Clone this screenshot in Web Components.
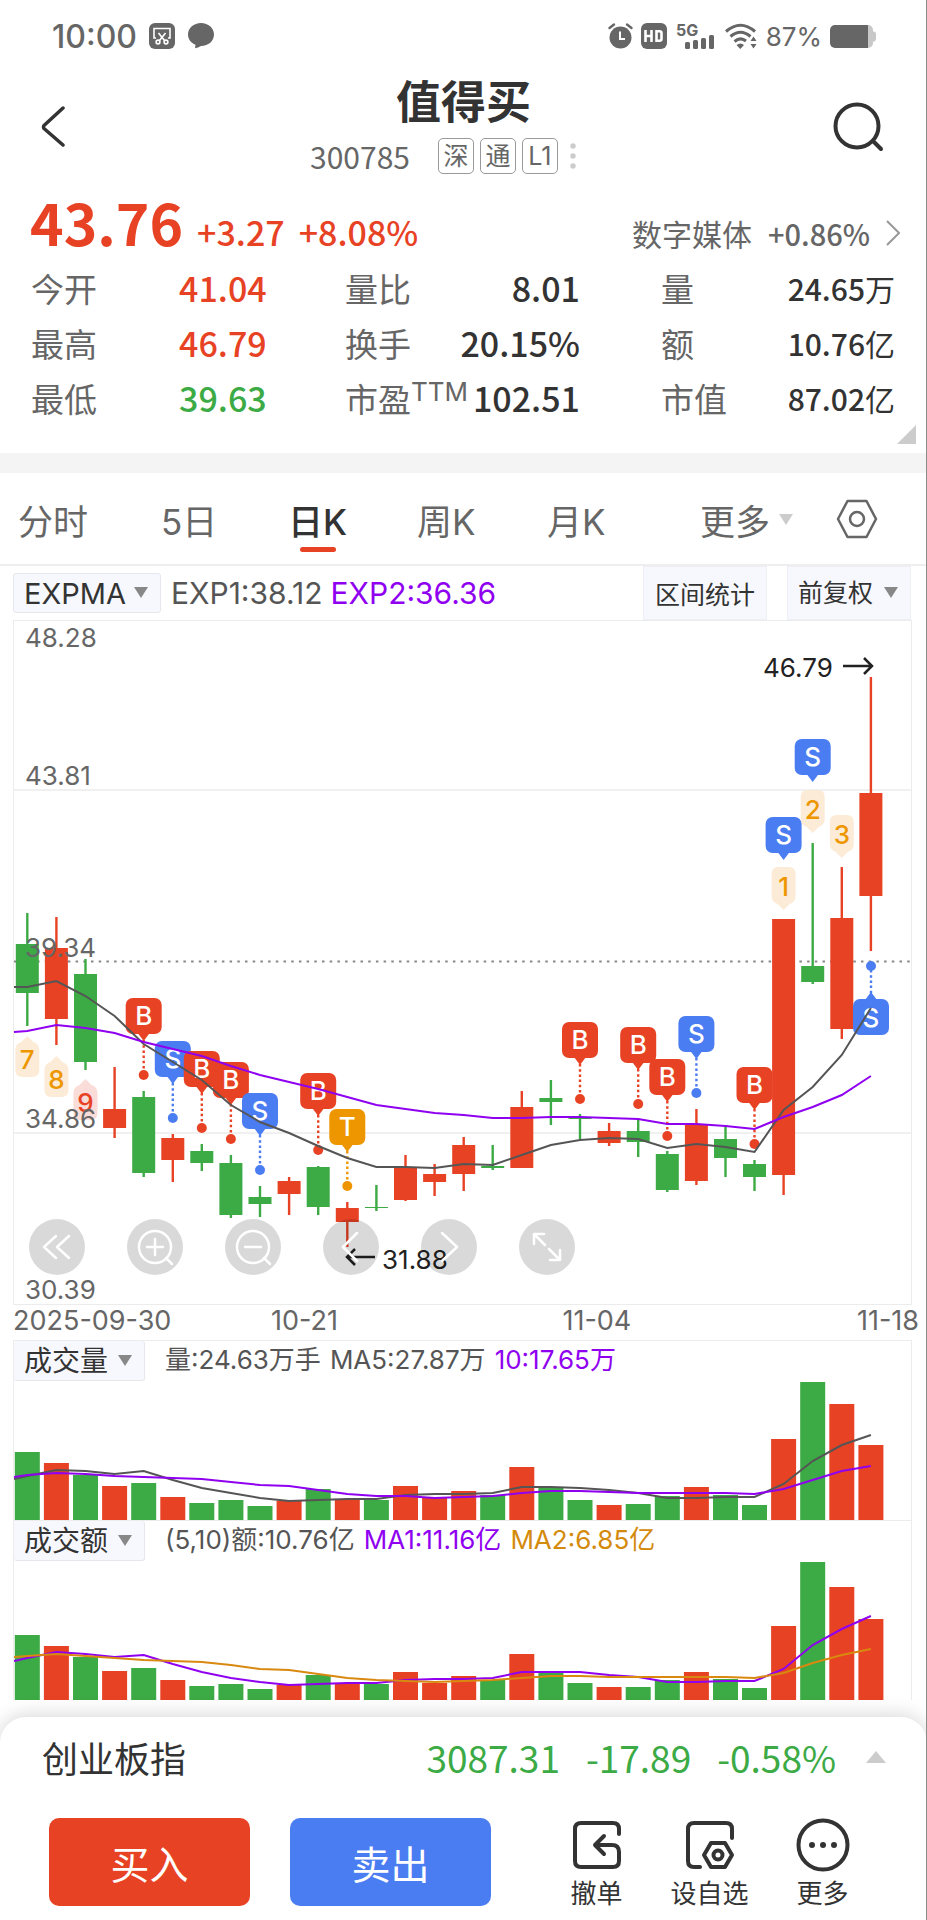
<!DOCTYPE html>
<html lang="zh-CN">
<head>
<meta charset="utf-8">
<meta name="viewport" content="width=device-width, initial-scale=1">
<title>值得买 300785</title>
<style>
  :root {
    --red: #e84225;
    --green: #3caa45;
    --blue: #4a7cf2;
    --orange: #ed9600;
    --purple: #9000f0;
    --ink: #333;
    --gray: #666;
    --line: #ececec;
    --chip: #f7f8fd;
    --num: "Noto Sans CJK SC", sans-serif;
  }

  body {
    margin: 0;
    background: #fff;
    color: var(--ink);
    font-family: Inter, "Noto Sans CJK SC", sans-serif;
  }

  /* 屏幕右侧的细边 */
  body::after {
    content: "";
    position: fixed;
    top: 0;
    right: 0;
    bottom: 0;
    width: 1px;
    background: #8c8c8c;
  }
</style>
</head>
<body>
<status-bar time="10:00" battery="87%"></status-bar>
<stock-header name="值得买" code="300785">
  <stock-tag>深</stock-tag>
  <stock-tag>通</stock-tag>
  <stock-tag>L1</stock-tag>
</stock-header>
<stock-quote></stock-quote>
<period-tabs></period-tabs>
<indicator-bar></indicator-bar>
<k-chart></k-chart>
<volume-chart kind="volume" title-text="成交量">
  <span>量:24.63万手</span>
  <span>MA5:27.87万</span>
  <span style="color: var(--purple)">10:17.65万</span>
</volume-chart>
<volume-chart kind="amount" title-text="成交额">
  <span>(5,10)额:10.76亿</span>
  <span style="color: var(--purple)">MA1:11.16亿</span>
  <span style="color: #d48a0c">MA2:6.85亿</span>
</volume-chart>
<trade-sheet></trade-sheet>

<script>
// 公共部分: 创建 shadow root 并写入模板
class BaseElement extends HTMLElement {
  constructor() {
    super();
    this.attachShadow({ mode: "open" });
  }

  connectedCallback() {
    this.shadowRoot.innerHTML = this.template();
  }
}

class StatusBar extends BaseElement {
  template() {
    return `
<style>
  :host {
    display: flex;
    align-items: center;
    height: 72px;
    padding: 0 51px 0 52px;
    color: #666;
  }
  .time { font-size: 32px; font-weight: 500; margin-right: 12px; }
  .msg { margin-left: 13px; }
  .right { margin-left: auto; display: flex; align-items: center; gap: 8px; }
  .percent { font-size: 26px; }
  svg { display: block; overflow: visible; }
</style>
<span class="time">${this.getAttribute("time")}</span>
<svg width="26" height="26" viewBox="0 0 26 26">
  <rect width="26" height="26" rx="6" fill="#666"/>
  <g fill="none" stroke="#fff" stroke-width="1.6">
    <path d="M7 15H5V5.500H21V15H19M9.500 10l6 7.500M16.500 10l-6 7.500"/>
    <circle cx="9" cy="19" r="1.900"/><circle cx="17" cy="19" r="1.900"/>
  </g>
</svg>
<svg class="msg" width="26" height="26" viewBox="0 0 26 26">
  <path fill="#666" d="M13 0c7.200 0 13 5 13 11.500S20.500 23 13 23c-2 1.200-4 2-6 2.300l.5-3.500C3 20 0 16 0 11.500 0 5 5.800 0 13 0z"/>
</svg>
<div class="right">
  <svg width="25" height="26" viewBox="0 0 25 26">
    <circle cx="12.500" cy="14.500" r="11" fill="#666"/>
    <path d="M1.500 5L6 1.500M23.500 5L19 1.500" stroke="#666" stroke-width="2.400" stroke-linecap="round"/>
    <path d="M12 8.500v7.500h5" fill="none" stroke="#fff" stroke-width="2"/>
  </svg>
  <svg width="26" height="26" viewBox="0 0 26 26">
    <rect width="26" height="26" rx="6" fill="#666"/>
    <path d="M4.500 7v12M10.500 7v12M4.500 13h6M15.500 8.200v9.600h3a2 2 0 0 0 2-2v-5.600a2 2 0 0 0-2-2z" fill="none" stroke="#fff" stroke-width="2.600"/>
  </svg>
  <svg width="41" height="28" viewBox="0 0 41 28">
    <text x="1" y="14" font-size="16" font-weight="700" fill="#666">5G</text>
    <g fill="#666">
      <rect x="10" y="20" width="5" height="7" rx="1.500"/><rect x="18" y="18" width="5" height="9" rx="1.500"/>
      <rect x="26" y="16" width="5" height="11" rx="1.500"/><rect x="34" y="13" width="5" height="14" rx="1.500"/>
    </g>
  </svg>
  <svg width="34" height="26" viewBox="0 0 34 26">
    <g fill="none" stroke="#666" stroke-width="3">
      <path d="M2 8.500Q16.500-4 31 8.500"/><path d="M6.500 13.500Q16.500 5 26.500 13.500"/><path d="M10.500 18.500Q16.500 13.500 22 18"/>
    </g>
    <path fill="#666" d="M12.500 22Q16.500 19 20 22l-3.700 4zM29.500 13.500l3 4.500h-6zM29.500 25.500l3-4.500h-6z"/>
  </svg>
  <span class="percent">${this.getAttribute("battery")}</span>
  <svg width="46" height="23" viewBox="0 0 46 23">
    <path d="M36 0h2a5 5 0 0 1 5 5v1.500a2.500 2.500 0 0 1 3 2.500v5a2.500 2.500 0 0 1-3 2.500V18a5 5 0 0 1-5 5h-2z" fill="#c8c8c8"/>
    <path d="M38 0v23H5a5 5 0 0 1-5-5V5a5 5 0 0 1 5-5z" fill="#666"/>
  </svg>
</div>`;
  }
}

class StockTag extends BaseElement {
  template() {
    return `
<style>
  :host {
    display: inline-flex;
    align-items: center;
    justify-content: center;
    box-sizing: border-box;
    width: 36px;
    height: 36px;
    border: 1px solid #999;
    border-radius: 5px;
    color: var(--gray);
    font-size: 25px;
    line-height: 1;
  }
</style>
<slot></slot>`;
  }
}

class StockHeader extends BaseElement {
  template() {
    return `
<style>
  :host {
    display: grid;
    grid-template-columns: 110px 1fr 110px;
    align-items: center;
    height: 110px;
    padding-bottom: 8px;
    box-sizing: border-box;
  }
  button { border: 0; background: none; padding: 0; cursor: pointer; display: flex; }
  .back { padding: 4px 0 0 40px; }
  .search { padding: 4px 0 0 16px; }
  .middle { text-align: center; }
  h1 { margin: 0; font-size: 45px; font-weight: 700; line-height: 62px; }
  .sub { display: flex; align-items: center; justify-content: center; height: 44px; gap: 6px; padding-right: 40px; }
  .code { font-family: var(--num); font-size: 30px; color: var(--gray); margin-right: 22px; }
  .dots { margin-left: 5px; }
</style>
<button class="back" aria-label="返回">
  <svg width="26" height="42" viewBox="0 0 26 42" fill="none" stroke="#333" stroke-width="3.500" stroke-linecap="round" stroke-linejoin="round"><path d="M23 2L4 19.500Q3 21 4 22.500L23 39"/></svg>
</button>
<div class="middle">
  <h1>${this.getAttribute("name")}</h1>
  <div class="sub">
    <span class="code">${this.getAttribute("code")}</span>
    <slot></slot>
    <svg class="dots" width="8" height="28" viewBox="0 0 8 28" fill="#ccc"><circle cx="4" cy="4" r="2.700"/><circle cx="4" cy="14" r="2.700"/><circle cx="4" cy="24" r="2.700"/></svg>
  </div>
</div>
<button class="search" aria-label="搜索">
  <svg width="54" height="54" viewBox="0 0 54 54" fill="none" stroke="#333" stroke-width="4" stroke-linecap="round"><circle cx="24" cy="26" r="21.500"/><path d="M40 41l8 8"/></svg>
</button>`;
  }
}

class StockQuote extends BaseElement {
  template() {
    return `
<style>
  :host {
    display: block;
    position: relative;
    height: 271px;
    border-bottom: 20px solid #f4f4f4;
    font-family: var(--num);
    color: var(--ink);
  }
  .top { display: flex; align-items: baseline; height: 78px; padding: 0 27px 0 30px; line-height: 78px; }
  .price { font-size: 57px; font-weight: 700; color: var(--red); }
  .diff { font-size: 34px; font-weight: 500; color: var(--red); margin-left: 14px; }
  .sector { display: flex; align-items: center; margin-left: auto; color: var(--gray); font-size: 30px; text-decoration: none; }
  .sector b { font-size: 29px; font-weight: 500; margin: 0 16px; }
  dl {
    display: grid;
    grid-template-columns: 148px 166px 128px 107px 145px 1fr;
    grid-auto-rows: 55px;
    align-items: center;
    margin: 0;
    padding: 0 32px 0 31px;
  }
  dt { font-size: 33px; color: var(--gray); white-space: nowrap; }
  dd { display: flex; align-items: center; margin: 0; font-size: 34px; font-weight: 500; white-space: nowrap; }
  .mid { justify-content: flex-end; }
  .mid + dt { padding-left: 81px; }
  .last { justify-content: flex-end; font-size: 30px; }
  .last span { font-weight: 400; }
  sup { font-family: Inter; font-size: 26px; line-height: 0; vertical-align: 11px; }
  .up { color: var(--red); }
  .down { color: var(--green); }
  .fold { position: absolute; right: 11px; bottom: 9px; }
</style>
<div class="top">
  <span class="price">43.76</span>
  <span class="diff">+3.27</span>
  <span class="diff">+8.08%</span>
  <a class="sector" href="#">数字媒体 <b>+0.86%</b>
    <svg width="14" height="26" viewBox="0 0 14 26" fill="none" stroke="#999" stroke-width="2"><path d="M1 1l12 12L1 25"/></svg>
  </a>
</div>
<dl>
  <dt>今开</dt><dd class="up">41.04</dd>
  <dt>量比</dt><dd class="mid">8.01</dd>
  <dt>量</dt><dd class="last">24.65<span>万</span></dd>
  <dt>最高</dt><dd class="up">46.79</dd>
  <dt>换手</dt><dd class="mid">20.15%</dd>
  <dt>额</dt><dd class="last">10.76<span>亿</span></dd>
  <dt>最低</dt><dd class="down">39.63</dd>
  <dt>市盈<sup>TTM</sup></dt><dd class="mid">102.51</dd>
  <dt>市值</dt><dd class="last">87.02<span>亿</span></dd>
</dl>
<svg class="fold" width="19" height="19" viewBox="0 0 19 19"><path d="M19 0v19H0z" fill="#ccc"/></svg>`;
  }
}

class PeriodTabs extends BaseElement {
  template() {
    return `
<style>
  :host { display: block; border-bottom: 2px solid #eee; }
  nav {
    display: grid;
    grid-template-columns: 143px 127px 129px 130px 153px 136px 1fr;
    height: 91px;
    padding-left: 18px;
  }
  button {
    position: relative;
    display: flex;
    align-items: center;
    gap: 9px;
    padding: 1px 0 0;
    border: 0;
    background: none;
    font: inherit;
    font-size: 35px;
    color: var(--gray);
    cursor: pointer;
  }
  .on { color: var(--ink); font-weight: 500; }
  .on span { position: relative; }
  .on span::after {
    content: "";
    position: absolute;
    left: 50%;
    bottom: -7px;
    width: 36px;
    height: 5px;
    margin-left: -18px;
    border-radius: 3px;
    background: var(--red);
  }
</style>
<nav>
  <button>分时</button>
  <button>5日</button>
  <button class="on"><span>日K</span></button>
  <button>周K</button>
  <button>月K</button>
  <button aria-haspopup="menu">更多 <svg width="14" height="11" viewBox="0 0 14 11"><path d="M0 0h14L7 11z" fill="#ccc"/></svg></button>
  <button aria-label="设置">
    <svg width="42" height="40" viewBox="0 0 42 40" fill="none" stroke="#666" stroke-width="2.500" stroke-linejoin="round"><path d="M11.500 2h19L40 20l-9.500 18h-19L2 20z"/><circle cx="21" cy="20" r="7"/></svg>
  </button>
</nav>`;
  }
}

// 带▼的下拉框
class DropPick extends BaseElement {
  template() {
    const label = this.getAttribute("label");
    const value = this.getAttribute("value");
    return `
<style>
  :host { display: inline-block; position: relative; box-sizing: border-box; background: var(--chip); border: 1px solid #e6e7ec; border-radius: 3px; }
  select {
    appearance: none;
    width: 100%;
    height: 100%;
    padding: 0 0 0 10px;
    border: 0;
    background: none;
    font: inherit;
    color: var(--ink);
  }
  svg { position: absolute; right: 12px; top: 50%; margin-top: -6px; pointer-events: none; }
</style>
<select aria-label="${label}"><option>${value}</option></select>
<svg width="14" height="11" viewBox="0 0 14 11"><path d="M0 0h14L7 11z" fill="#888"/></svg>`;
  }
}

class IndicatorBar extends BaseElement {
  template() {
    return `
<style>
  :host { display: flex; align-items: center; height: 54px; padding: 0 16px 0 13px; font-size: 30px; }
  .exp { width: 148px; height: 40px; font-size: 29px; }
  .v { margin-left: 10px; color: #555; }
  .v + .v { margin-left: 8px; color: var(--purple); }
  button { margin-left: auto; width: 124px; height: 54px; padding: 0; border: 1px solid #eeeff5; background: var(--chip); font: inherit; font-size: 25px; color: var(--ink); }
  .adj { width: 124px; height: 54px; margin-left: 20px; font-size: 25px; border-color: #eeeff5; border-radius: 0; }
</style>
<drop-pick class="exp" label="指标" value="EXPMA"></drop-pick>
<span class="v">EXP1:38.12</span>
<span class="v">EXP2:36.36</span>
<button>区间统计</button>
<drop-pick class="adj" label="复权" value="前复权"></drop-pick>`;
  }
}

// 30根K线的中心横坐标
const X = i => (27.3 + i * 29.09).toFixed(1);
const COLORS = { r: "#e84225", g: "#3caa45" };

// [颜色, 最高, 实体上沿, 实体下沿, 最低]
const CANDLES = [
  ["g", 913, 944, 993, 1026], ["r", 917, 948, 1019, 1045], ["g", 959, 974, 1062, 1070],
  ["r", 1067, 1109, 1128, 1138], ["g", 1091, 1097, 1173, 1177], ["r", 1134, 1138, 1160, 1182],
  ["g", 1144, 1151, 1163, 1171], ["g", 1155, 1163, 1215, 1218], ["g", 1186, 1197, 1204, 1217],
  ["r", 1177, 1181, 1194, 1215], ["g", 1166, 1167, 1207, 1215], ["r", 1202, 1208, 1222, 1247],
  ["g", 1185, 1207, 1208, 1211], ["r", 1155, 1168, 1200, 1201], ["r", 1164, 1174, 1182, 1196],
  ["r", 1137, 1145, 1174, 1191], ["g", 1145, 1166, 1168, 1170], ["r", 1091, 1107, 1168, 1168],
  ["g", 1080, 1098, 1102, 1125], ["g", 1114, 1118, 1119, 1139], ["r", 1123, 1131, 1143, 1146],
  ["g", 1120, 1131, 1142, 1157], ["g", 1151, 1154, 1190, 1192], ["r", 1109, 1125, 1181, 1185],
  ["g", 1125, 1139, 1158, 1177], ["g", 1160, 1164, 1177, 1191], ["r", 919, 919, 1175, 1195],
  ["g", 843, 966, 982, 984], ["r", 867, 918, 1029, 1039], ["r", 677, 793, 896, 951],
];

// 第一个值是左边框处的高度
const EXP1 = [987, 987, 981, 996, 1016, 1044, 1062, 1080, 1105, 1122, 1133, 1146, 1158, 1167, 1167, 1168, 1164, 1165, 1155, 1145, 1140, 1138, 1139, 1148, 1144, 1147, 1152, 1110, 1087, 1055, 1008];
const EXP2 = [1032, 1031, 1025, 1028, 1033, 1042, 1049, 1056, 1066, 1075, 1082, 1089, 1097, 1105, 1109, 1113, 1115, 1118, 1118, 1117, 1117, 1118, 1119, 1124, 1124, 1126, 1129, 1117, 1107, 1095, 1076];

// 买卖点 [字母, 第几根K线, 上沿, 是否有虚线]
const MARKS = [
  ["B", 4, 998, 1], ["S", 5, 1041, 1], ["B", 6, 1051, 1], ["B", 7, 1062, 1], ["S", 8, 1093, 1],
  ["B", 10, 1073, 1], ["T", 11, 1109, 1], ["B", 19, 1022, 1], ["B", 21, 1027, 1], ["B", 22, 1059, 1],
  ["S", 23, 1016, 1], ["B", 25, 1067, 1], ["S", 26, 817, 0], ["S", 27, 739, 0],
];
const MARK_COLORS = { B: "#e84225", S: "#4a7cf2", T: "#ed9600" };

const polyline = (ys, color) =>
  `<polyline fill="none" stroke="${color}" stroke-width="2" points="${ys.map((y, i) => `${i ? X(i - 1) : 14},${y}`).join(" ")}"/>`;

class KChart extends BaseElement {
  candles() {
    return CANDLES.map(([c, high, top, bottom, low], i) => {
      const x = +X(i);
      return `<g fill="${COLORS[c]}"><rect x="${x - 1.2}" y="${high}" width="2.400" height="${low - high}"/><rect x="${x - 11.5}" y="${top}" width="23" height="${bottom - top}"/></g>`;
    }).join("");
  }

  marks() {
    return MARKS.map(([t, i, top, dotted]) => {
      const x = +X(i);
      const c = MARK_COLORS[t];
      const line = dotted
        ? `<path d="M${x} ${top + 42}v31" stroke="${c}" stroke-width="2.400" stroke-dasharray="2.500 2.700"/><circle cx="${x}" cy="${top + 77}" r="5"/>`
        : "";
      return `<g fill="${c}"><rect x="${x - 18}" y="${top}" width="36" height="36" rx="7"/><path d="M${x - 6} ${top + 35}h12l-6 8z"/>${line}<text x="${x}" y="${top + 27}" class="m">${t}</text></g>`;
    }).join("");
  }

  // 九转数字, up 为 true 时尖角朝上
  count(n, i, y, up, color, back) {
    const x = +X(i);
    const shape = up
      ? `M${x} ${y}l6 6q6 2 6 8v20q0 7-7 7h-10q-7 0-7-7v-20q0-6 6-8z`
      : `M${x} ${y + 43}l-6-6q-6-2-6-8v-22q0-7 7-7h10q7 0 7 7v22q0 6-6 8z`;
    return `<path d="${shape}" fill="${back}"/><text x="${x}" y="${y + (up ? 33 : 29)}" class="n" fill="${color}">${n}</text>`;
  }

  template() {
    const yellow = ["#ed9600", "#fcecd7"];
    return `
<style>
  :host { display: block; margin: 0 8px 0 13px; color: var(--gray); }
  .frame { position: relative; margin-right: 7px; border: 1px solid var(--line); }
  .plot { display: block; width: 100%; height: auto; overflow: visible; font-size: 26px; }
  .m { fill: #fff; font-size: 26px; font-weight: 500; text-anchor: middle; }
  .n { font-size: 26px; font-weight: 500; text-anchor: middle; }
  .tools { position: absolute; left: 15px; bottom: 29px; display: flex; gap: 42px; }
  .tools button { width: 56px; height: 56px; padding: 0; border: 0; border-radius: 50%; background: rgba(0, 0, 0, 0.15); }
  .tools svg { display: block; fill: none; stroke: #fff; stroke-width: 2.5; stroke-linecap: round; stroke-linejoin: round; }
  .dates { display: grid; grid-template-columns: 255fr 288fr 291fr auto; height: 35px; font-size: 27px; line-height: 32px; }
</style>
<div class="frame">
  <svg class="plot" viewBox="14 621 897 683">
    <path d="M14 790H911M14 1133H911" stroke="#ececec" stroke-width="1.500"/>
    <path d="M14 961.500H911" stroke="#888" stroke-width="2" stroke-dasharray="2.500 5.200"/>
    ${this.candles()}
    ${this.count(7, 0, 1036, true, ...yellow)}
    ${this.count(8, 1, 1056, true, ...yellow)}
    ${this.count(9, 2, 1079, true, "#e84225", "#fadcd8")}
    ${this.count(1, 26, 867, false, ...yellow)}
    ${this.count(2, 27, 790, false, ...yellow)}
    ${this.count(3, 28, 815, false, ...yellow)}
    ${this.marks()}
    <g fill="#4a7cf2">
      <rect x="853" y="999" width="36" height="36" rx="7"/><path d="M865 1000h12l-6-8z"/>
      <path d="M871 970v24" stroke="#4a7cf2" stroke-width="2.400" stroke-dasharray="2.500 2.700"/>
      <circle cx="871" cy="966" r="5"/><text x="871" y="1027" class="m">S</text>
    </g>
    ${polyline(EXP1, "#555")}
    ${polyline(EXP2, "#9000f0")}
    <g fill="#666">
      <text x="25" y="647">48.28</text>
      <text x="25" y="785">43.81</text>
      <text x="25" y="957">39.34</text>
      <text x="25" y="1128">34.86</text>
      <text x="25" y="1299">30.39</text>
    </g>
    <g fill="#222">
      <text x="763" y="677">46.79</text>
      <text x="382" y="1269">31.88</text>
      <path d="M843 666h28M864 658l8 8-8 8M375 1257h-28M355 1249l-8 8 8 8" fill="none" stroke="#222" stroke-width="2.500"/>
    </g>
  </svg>
  <div class="tools">
    <button aria-label="最前"><svg width="56" height="56" viewBox="0 0 56 56"><path d="M27 17L15 28l12 11M40 17L28 28l12 11"/></svg></button>
    <button aria-label="放大"><svg width="56" height="56" viewBox="0 0 56 56"><circle cx="28" cy="28" r="16"/><path d="M20 28h16M28 20v16M39 39l6 6"/></svg></button>
    <button aria-label="缩小"><svg width="56" height="56" viewBox="0 0 56 56"><circle cx="28" cy="28" r="16"/><path d="M20 28h16M39 39l6 6"/></svg></button>
    <button aria-label="向左"><svg width="56" height="56" viewBox="0 0 56 56"><path d="M34 14L20 28l14 14"/></svg></button>
    <button aria-label="向右"><svg width="56" height="56" viewBox="0 0 56 56"><path d="M21 14l15 14-15 14"/></svg></button>
    <button aria-label="全屏"><svg width="56" height="56" viewBox="0 0 56 56"><path d="M25 15H15v10M15 15l11 11M31 41h10V31M41 41L30 30"/></svg></button>
  </div>
</div>
<div class="dates"><span>2025-09-30</span><span>10-21</span><span>11-04</span><span>11-18</span></div>`;
  }
}

// 柱高和均线, 都从底边算起
const VOLUMES = {
  volume: {
    bars: [68, 57, 45, 34, 37, 23, 17, 20, 14, 19, 31, 20, 20, 34, 23, 29, 25, 53, 32, 20, 15, 16, 24, 33, 25, 15, 81, 138, 116, 75],
    lines: [
      ["#555", [41, 44, 50, 49, 46, 49, 40, 32, 27, 22, 19, 20, 21, 21, 25, 26, 26, 27, 33, 33, 32, 30, 27, 22, 22, 23, 23, 36, 59, 75, 85]],
      ["#9000f0", [43, 45, 47, 46, 44, 43, 42, 41, 38, 35, 34, 30, 26, 24, 24, 22, 23, 24, 27, 29, 29, 28, 27, 27, 27, 27, 26, 31, 40, 49, 54]],
    ],
  },
  amount: {
    bars: [65, 54, 43, 29, 32, 20, 14, 16, 11, 15, 25, 16, 16, 28, 17, 24, 20, 46, 27, 17, 13, 13, 20, 28, 21, 12, 74, 138, 113, 81],
    lines: [
      ["#9000f0", [39, 42, 48, 46, 43, 45, 36, 28, 22, 18, 15, 16, 17, 17, 20, 21, 21, 22, 28, 28, 28, 25, 23, 18, 18, 19, 19, 31, 55, 71, 84]],
      ["#d9890f", [43, 44, 46, 44, 42, 40, 39, 38, 35, 31, 30, 26, 22, 20, 19, 18, 19, 20, 22, 24, 24, 23, 23, 23, 23, 23, 22, 27, 37, 45, 51]],
    ],
  },
};

class VolumeChart extends BaseElement {
  template() {
    const { bars, lines } = VOLUMES[this.getAttribute("kind")];
    const title = this.getAttribute("title-text");
    const rects = bars.map((h, i) =>
      `<rect x="${+X(i) - 12.5}" y="${139 - h}" width="25" height="${h}" fill="${COLORS[CANDLES[i][0]]}"/>`).join("");
    return `
<style>
  :host { display: block; margin: 0 15px 0 13px; border: 1px solid var(--line); border-bottom: 0; color: #555; }
  .head { display: flex; height: 40px; }
  .head drop-pick { width: 131px; height: 40px; border-top: 0; border-left: 0; font-size: 28px; }
  .info { display: flex; gap: 9px; margin-left: 20px; font-size: 26px; line-height: 38px; white-space: nowrap; }
  svg { display: block; width: 100%; height: auto; }
</style>
<div class="head">
  <drop-pick label="副图" value="${title}"></drop-pick>
  <div class="info"><slot></slot></div>
</div>
<svg viewBox="14 0 897 139">${rects}${lines.map(([c, hs]) => polyline(hs.map(h => 139 - h), c)).join("")}</svg>`;
  }
}

class TradeSheet extends BaseElement {
  template() {
    return `
<style>
  :host {
    display: block;
    position: relative;
    margin-top: 17px;
    height: 203px;
    border-radius: 26px 26px 0 0;
    background: #fff;
    box-shadow: 0 -2px 20px rgba(0, 0, 0, 0.16);
    color: var(--ink);
  }
  .index { display: flex; align-items: center; height: 80px; padding: 0 41px 0 42px; font-size: 36px; }
  .index span { font-family: var(--num); font-size: 37px; color: var(--green); margin-left: 26px; }
  .index span:first-of-type { margin-left: auto; }
  .index svg { margin-left: 30px; }
  .actions { display: grid; grid-template-columns: 201px 201px 1fr; column-gap: 40px; padding: 21px 48px 0 49px; }
  .actions button { padding: 0; border: 0; font: inherit; cursor: pointer; }
  .actions .buy, .actions .sell { height: 88px; border-radius: 10px; color: #fff; font-size: 39px; }
  .buy { background: var(--red); }
  .sell { background: var(--blue); }
  .icons { display: grid; grid-template-columns: repeat(3, 1fr); margin-left: 9px; }
  .actions .icons button { display: flex; flex-direction: column; align-items: center; gap: 3px; background: none; font-size: 26px; line-height: 38px; color: var(--ink); white-space: nowrap; }
  .icons svg { fill: none; stroke: #333; stroke-width: 4; stroke-linecap: round; stroke-linejoin: round; }
</style>
<div class="index">
  创业板指
  <span>3087.31</span><span>-17.89</span><span>-0.58%</span>
  <svg width="20" height="12" viewBox="0 0 20 12"><path d="M10 0l10 12H0z" fill="#ccc"/></svg>
</div>
<div class="actions">
  <button class="buy">买入</button>
  <button class="sell">卖出</button>
  <div class="icons">
    <button><svg width="54" height="54" viewBox="0 0 54 54"><path d="M49 16v-5q0-6-6-6H11Q5 5 5 11v32q0 6 6 6h32q6 0 6-6v-9q0-7-7-7H25M34 18l-9 9 9 9"/></svg>撤单</button>
    <button><svg width="54" height="54" viewBox="0 0 54 54"><path d="M49 20V11q0-6-6-6H11Q5 5 5 11v32q0 6 6 6h6M28 25h14l7 12-7 12H28l-7-12z"/><circle cx="35" cy="37" r="4.500"/></svg>设自选</button>
    <button><svg width="54" height="54" viewBox="0 0 54 54"><circle cx="27" cy="27" r="24.500"/><g fill="#333" stroke="none"><circle cx="16" cy="27" r="3"/><circle cx="27" cy="27" r="3"/><circle cx="38" cy="27" r="3"/></g></svg>更多</button>
  </div>
</div>`;
  }
}

customElements.define("status-bar", StatusBar);
customElements.define("stock-tag", StockTag);
customElements.define("stock-header", StockHeader);
customElements.define("stock-quote", StockQuote);
customElements.define("period-tabs", PeriodTabs);
customElements.define("drop-pick", DropPick);
customElements.define("indicator-bar", IndicatorBar);
customElements.define("k-chart", KChart);
customElements.define("volume-chart", VolumeChart);
customElements.define("trade-sheet", TradeSheet);
</script>
</body>
</html>
